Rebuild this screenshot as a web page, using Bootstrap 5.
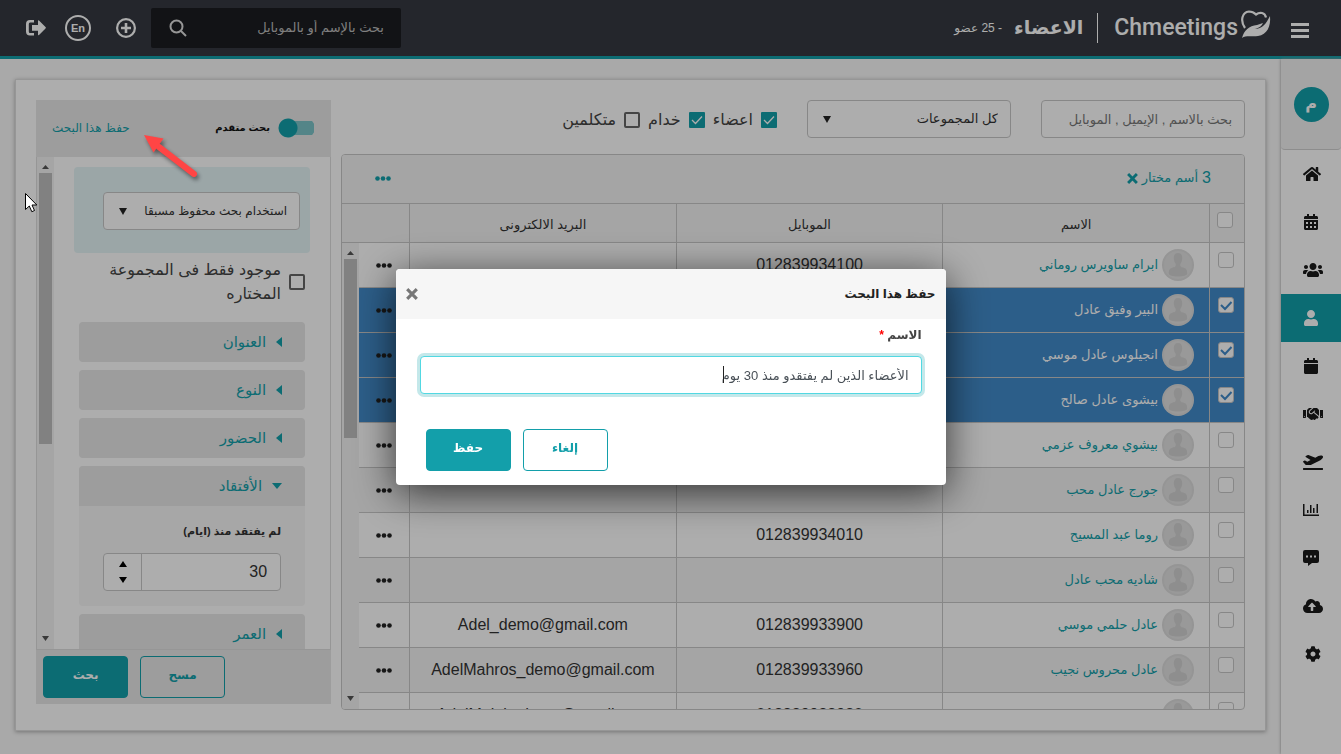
<!DOCTYPE html>
<html lang="ar" dir="rtl">
<head>
<meta charset="utf-8">
<meta name="viewport" content="width=device-width, initial-scale=1">
<title>Chmeetings</title>
<link rel="stylesheet" href="https://cdn.jsdelivr.net/npm/bootstrap@5.3.0/dist/css/bootstrap.min.css">
<style>
:root{--teal:#139faa;--line:#c8c8c8;--soft:#f3f3f3;--shade:#e7e7e7}
body{font-family:"Liberation Sans","DejaVu Sans",sans-serif;font-size:14px;line-height:20px;background:#f9f9f9;color:#333}
a{color:var(--teal);text-decoration:none}
svg{display:block;fill:currentColor}
.app{height:100vh;min-height:560px}
.shrinkable{min-width:0;min-height:0}
.topbar{height:59px;background:#353941;border-bottom:3px solid var(--teal);color:#fff;padding:0 32px 0 26px}
.topbar button{border:0;background:none;color:inherit;padding:0}
.menu-btn{padding-top:5px!important}
.brand{font-family:Roboto,"Liberation Sans",sans-serif;font-size:23px;font-weight:500;color:#fff;gap:3px;margin-right:20px}
.rule-v{width:1px;height:30px;background:#fff;margin:0 16px 0 14px}
.page-title{font-size:19px;font-weight:700;margin:0}
.count{font-size:12px;margin-right:12px}
.top-search{width:250px;height:40px;background:#1b1d21;border-radius:2px;padding:0 15px 0 18px;margin-left:15px}
.top-search input{background:none;border:0;outline:0;color:#ccc;font-size:13px;min-width:0}
.top-search input::placeholder{color:#bbb;opacity:1}
.top-search svg{fill:none}
.topbar .lang{width:26px;height:26px;border:2px solid #fff;border-radius:50%;font-size:11px;font-weight:700;line-height:20px;margin:0 25px 0 19px}
.side{width:60px;background:#fff;box-shadow:0 0 3px #999;color:#1a1a1a;flex:none}
.side-user{height:91px;background:#f2f2f2;border-bottom:1px solid #d0d0d0;border-radius:0 0 4px 4px}
.avatar-me{width:35px;height:35px;border-radius:50%;background:var(--teal);color:#fff;font-size:16px;font-weight:700}
.side a{height:48px;color:#1a1a1a;padding-left:22px}
.side a.active{background:var(--teal);color:#fff}
.main{padding:20px 15px 23px;min-width:0}
.sheet{background:#fff;border:1px solid #ddd;box-shadow:0 1px 4px #aaa;padding:20px;gap:10px}
.filters{gap:30px;margin-bottom:16px}
.field{height:38px;border:1px solid var(--line);border-radius:4px;background-color:#fff;font-size:13px;padding:0 12px;color:#333;outline:0}
.filters .field{flex:0 1 204px;min-width:0}
.field::placeholder{color:#777;opacity:1}
select.field{appearance:none;background-image:url("data:image/svg+xml,%3Csvg xmlns='http://www.w3.org/2000/svg' viewBox='0 0 8 7'%3E%3Cpath d='M0 0h8L4 7z' fill='%23222'/%3E%3C/svg%3E");background-repeat:no-repeat;background-position:15px center;background-size:8px 7px;padding-left:28px}
.tick{appearance:none;width:16px;height:16px;margin:0;flex:none;border:1px solid var(--line);border-radius:3px;background:#fff center/14px no-repeat}
.tick-dark{border:2px solid #666;border-radius:2px}
.tick-teal{border:0;border-radius:1px;background-color:var(--teal);background-image:url("data:image/svg+xml,%3Csvg xmlns='http://www.w3.org/2000/svg' viewBox='0 0 14 14'%3E%3Cpath d='M2 7l3.500 3.500L12 3.500' fill='none' stroke='%23fff' stroke-width='1.300'/%3E%3C/svg%3E")}
.grid-tbl .tick:checked{background-image:url("data:image/svg+xml,%3Csvg xmlns='http://www.w3.org/2000/svg' viewBox='0 0 14 14'%3E%3Cpath d='M2 7l4 4 6.500-7' fill='none' stroke='%23428bca' stroke-width='2'/%3E%3C/svg%3E")}
.opt{font-size:16px;padding-top:2px;color:#444}
.listing{border:1px solid var(--line);border-radius:4px;overflow:hidden;min-height:0}
.tools{height:49px;background:var(--soft);border-bottom:1px solid var(--line);padding:0 33px 2px}
.tools a{font-size:13px}
.num{font-size:16px}
.grid-tbl{width:100%;table-layout:fixed;border-collapse:separate;border-spacing:0}
.grid-tbl th,.grid-tbl td{border-bottom:1px solid var(--line);border-left:1px solid var(--line);text-align:center;padding:0;vertical-align:middle;font-weight:400}
.grid-tbl th:last-child,.grid-tbl td:last-child{border-left:0}
.grid-tbl th{height:39px;background:var(--soft);font-size:13px;padding-top:4px}
.grid-tbl td{height:45px;font-size:16px}
.grid-tbl td:first-child,.grid-tbl th:first-child{vertical-align:top;padding:9px 2px 0 0}
.grid-tbl th:first-child{padding:8px 4px 0 0}
.grid-tbl tr:nth-child(even) td{background:var(--soft)}
.grid-tbl tr.picked td{background:#428bca}
.grid-tbl tr.picked a{color:#fff}
.who{font-size:13px;gap:4px;padding-right:15px}
.col-tick{width:35px}.col-act{width:50px}.col-act-head{width:67px}
.grid-tbl button,.tools button{border:0;background:none;padding:0;color:#222;display:block;margin:0 auto}
.tools button{color:var(--teal);margin:0}
.bar{width:17px;background:var(--soft);flex:none;color:#555}
.thumb{background:#bfbfbf;width:13px}
.panel{width:295px;flex:none;padding-bottom:6px}
.panel-top{height:57px;background:var(--shade);padding:0 16px 2px}
.panel-top a{font-size:12px}
.toggle{appearance:none;width:37px;height:20px;margin:0;background:radial-gradient(circle at 10px 10px,var(--teal) 9px,transparent 10px),linear-gradient(#7cc4c9,#7cc4c9) 4px 3px/32px 14px no-repeat;border-radius:10px}
.toggle-label{font-size:10px;font-weight:700;color:#111}
.panel-body{border:1px solid #ddd;border-top:0;min-height:0;overflow:hidden}
.preset{background:#e5f5f7;border-radius:4px;padding:25px 10px 23px 29px;margin:10px 20px 5px}
.preset .field{font-size:12px}
.only{padding:0 25px;font-size:16px;line-height:24px;gap:8px;margin-bottom:16px;color:#444}
.only label{width:190px}
.fold{margin:0 25px 8px;background:#f6f6f6;border-radius:4px;overflow:hidden}
.fold summary{height:40px;background:var(--shade);color:var(--teal);font-size:15px;padding:0 23px;gap:10px;list-style:none}
.fold-in{padding:15px 24px}
.fold-in label{font-size:11px;font-weight:700;color:#333;margin-bottom:12px}
.spin{height:38px;border:1px solid var(--line);border-radius:4px;background:#fff}
.spin input{border:0;outline:0;background:none;font-size:16px;color:#333;text-align:right;padding:0 13px;min-width:0;direction:ltr;appearance:textfield}
.spin input::-webkit-inner-spin-button{appearance:none}
.spin-btns{width:38px;border-right:1px solid var(--line);gap:10px;flex:none}
.spin-btns button{border:0;background:none;padding:0}
.panel-foot{background:var(--shade);padding:6px 7px;gap:12px}
.act{width:85px;height:42px;border:1px solid var(--teal);border-radius:4px;background:none;color:var(--teal);font-size:12px;font-weight:700;padding:0 0 4px}
.act-main{background:var(--teal);color:#fff}
.modal-backdrop.show{opacity:.32}
.modal-dialog{max-width:550px}
.modal-content{border:0;border-radius:4px;box-shadow:0 8px 40px rgba(0,0,0,.7)}
.modal-header{background:#f6f6f6;height:50px;padding:0 10px;border:0;border-radius:4px 4px 0 0}
.modal-title{font-size:12px;font-weight:700;color:#222}
.modal-header button{border:0;background:none;padding:0;color:#777}
.modal-body{padding:6px 24px 14px}
.modal-body label{font-size:12px;font-weight:700;color:#444;margin-bottom:11px}
.req{color:#f00}
.modal-body .field{border-color:#52d8e2;box-shadow:0 0 0 3px #c4e8ea;color:#495057;caret-color:#222}
.caret-line{position:absolute;right:198px;top:10px;width:1px;height:17px;background:#222}
.modal-foot{padding:21px 30px 14px;gap:12px}
.callout{position:fixed;z-index:1070;left:130px;top:124px;filter:drop-shadow(2px 3px 2px rgba(0,0,0,.45))}
.pointer{position:fixed;z-index:1070;left:24px;top:192px}
</style>
</head>
<body>
<svg width="0" height="0" class="position-absolute" aria-hidden="true">
<symbol id="dots" viewBox="0 0 16 5"><circle cx="2.500" cy="2.500" r="2.300"/><circle cx="8" cy="2.500" r="2.300"/><circle cx="13.500" cy="2.500" r="2.300"/></symbol>
<symbol id="face" viewBox="0 0 32 32"><circle cx="16" cy="16" r="16" fill="#dcdcdc"/><circle cx="16" cy="16" r="14" fill="#e2e2e2"/><path d="M16 4c3 0 4.200 2 4.200 5s-1 5-2 6c0 3 1 3 3 3.500 3 1 4 2 4 6 0 2-4 3-9.200 3s-9.200-1-9.200-3c0-4 1-5 4-6 2-.5 3-.5 3-3.500-1-1-2-3-2-6s1.200-5 4.200-5z" fill="#d2d2d2"/></symbol>
<symbol id="up" viewBox="0 0 8 6"><path d="M0 6h8L4 0z"/></symbol>
<symbol id="down" viewBox="0 0 8 6"><path d="M0 0h8L4 6z"/></symbol>
<symbol id="left" viewBox="0 0 6 10"><path d="M6 0v10L0 5z"/></symbol>
<symbol id="cross" viewBox="0 0 10 10"><path d="M1 1l8 8M9 1l-8 8" stroke="currentColor" stroke-width="2.600"/></symbol>
</svg>

<div class="app d-flex flex-column">
<header class="topbar d-flex align-items-center justify-content-between flex-shrink-0">
  <div class="d-flex align-items-center">
    <button type="button" class="menu-btn" aria-label="القائمة"><svg width="18" height="16" viewBox="0 0 18 16"><path d="M0 0h18v3H0zM0 6h18v3H0zM0 12h18v3H0z"/></svg></button>
    <a href="#" class="brand d-flex align-items-center" dir="ltr"><span>Chmeetings</span><svg class="mb-2" width="30" height="30" viewBox="0 0 30 30"><path d="M4 19C-1 12 1 3 8 2.500c3 0 5 1 7 3 4-3 9-2 10 3" fill="none" stroke="#fff" stroke-width="2.200"/><path d="M1 29c2-8 7-12 15-13l6-2c-1 3-4 5-8 6 7 0 11-5 15-13 1 10-3 19-12 20-6 1-12-1-16 2z"/></svg></a>
    <span class="rule-v"></span>
    <h1 class="page-title">الاعضاء</h1>
    <span class="count">- 25 عضو</span>
  </div>
  <div class="d-flex align-items-center">
    <form class="top-search d-flex align-items-center" role="search">
      <input class="flex-grow-1" type="search" aria-label="بحث" placeholder="بحث بالإسم أو بالموبايل">
      <button type="button" aria-label="بحث"><svg width="18" height="18" viewBox="0 0 18 18" stroke="#ddd" stroke-width="2"><circle cx="7.500" cy="7.500" r="6"/><path d="M12 12l5 5"/></svg></button>
    </form>
    <button type="button" aria-label="إضافة"><svg width="20" height="20" viewBox="0 0 20 20"><path fill-rule="evenodd" d="M10 0a10 10 0 1 1 0 20 10 10 0 0 1 0-20zm0 2.200a7.800 7.800 0 1 0 0 15.600 7.800 7.800 0 0 0 0-15.600z"/><path d="M8.700 5h2.600v3.700H15v2.600h-3.700V15H8.700v-3.700H5V8.700h3.700z"/></svg></button>
    <button type="button" class="lang">En</button>
    <button type="button" aria-label="خروج"><svg width="20" height="16" viewBox="0 0 20 16"><path d="M8 0v2.500H4Q2.800 2.500 2.800 4v7.500q0 1.500 1.200 1.500h4v2.500H4q-4 0-4-4V4q0-4 4-4z"/><path d="M6 5h6V1q0-1 1-.5l6.500 6.600q.7.700 0 1.400L13 15q-1 .7-1-.5v-3.800H6z"/></svg></button>
  </div>
</header>

<div class="d-flex flex-grow-1 shrinkable">
<nav class="side">
  <div class="side-user d-flex align-items-center justify-content-center"><span class="avatar-me d-flex align-items-center justify-content-center">م</span></div>
  <a href="#" class="d-flex align-items-center justify-content-end" aria-label="الرئيسية"><svg width="18" height="16" viewBox="0 0 576 512"><path d="M280.370 148.260L96 300.110V464a16 16 0 0 0 16 16l112.060-.29a16 16 0 0 0 15.920-16V368a16 16 0 0 1 16-16h64a16 16 0 0 1 16 16v95.640a16 16 0 0 0 16 16.050L464 480a16 16 0 0 0 16-16V300L295.670 148.260a12.190 12.190 0 0 0-15.300 0zM571.600 251.470L488 182.560V44.050a12 12 0 0 0-12-12h-56a12 12 0 0 0-12 12v72.610L318.470 43a48 48 0 0 0-61 0L4.340 251.470a12 12 0 0 0-1.600 16.900l25.500 31A12 12 0 0 0 45.150 301l235.220-193.740a12.190 12.190 0 0 1 15.300 0L530.900 301a12 12 0 0 0 16.900-1.600l25.500-31a12 12 0 0 0-1.700-16.930z"/></svg></a>
  <a href="#" class="d-flex align-items-center justify-content-end" aria-label="التقويم"><svg width="16" height="16" viewBox="0 0 448 512"><path fill-rule="evenodd" d="M12 192h424c6.600 0 12 5.400 12 12v260c0 26.500-21.500 48-48 48H48c-26.500 0-48-21.500-48-48V204c0-6.600 5.400-12 12-12zm436-44v-36c0-26.500-21.500-48-48-48h-48V12c0-6.600-5.400-12-12-12h-40c-6.600 0-12 5.400-12 12v52H160V12c0-6.600-5.400-12-12-12h-40c-6.600 0-12 5.400-12 12v52H48C21.500 64 0 85.500 0 112v36c0 6.600 5.400 12 12 12h424c6.600 0 12-5.400 12-12zM64 256v64h64v-64zM192 256v64h64v-64zM320 256v64h64v-64zM64 384v64h64v-64zM192 384v64h64v-64zM320 384v64h64v-64z"/></svg></a>
  <a href="#" class="d-flex align-items-center justify-content-end" aria-label="المجموعات"><svg width="20" height="16" viewBox="0 0 640 512"><path d="M96 224c35.300 0 64-28.700 64-64s-28.700-64-64-64-64 28.700-64 64 28.700 64 64 64zm448 0c35.300 0 64-28.700 64-64s-28.700-64-64-64-64 28.700-64 64 28.700 64 64 64zm32 32h-64c-17.600 0-33.500 7.100-45.100 18.600 40.300 22.100 68.900 62 75.100 109.400h66c17.700 0 32-14.300 32-32v-32c0-35.300-28.700-64-64-64zm-256 0c61.900 0 112-50.100 112-112S381.900 32 320 32 208 82.100 208 144s50.100 112 112 112zm76.800 32h-8.300c-20.800 10-43.900 16-68.500 16s-47.600-6-68.500-16h-8.300C179.600 288 128 339.600 128 403.200V432c0 26.500 21.500 48 48 48h288c26.500 0 48-21.500 48-48v-28.800c0-63.600-51.600-115.200-115.200-115.200zm-223.700-13.400C161.500 263.100 145.600 256 128 256H64c-35.300 0-64 28.700-64 64v32c0 17.700 14.300 32 32 32h65.900c6.300-47.400 34.900-87.300 75.200-109.400z"/></svg></a>
  <a href="#" class="active d-flex align-items-center justify-content-end" aria-label="الاعضاء"><svg width="16" height="16" viewBox="0 0 448 512"><path d="M224 256c70.700 0 128-57.300 128-128S294.700 0 224 0 96 57.300 96 128s57.300 128 128 128zm89.600 32h-16.700c-22.200 10.200-46.900 16-72.900 16s-50.600-5.800-72.900-16h-16.700C60.200 288 0 348.200 0 422.400V464c0 26.500 21.500 48 48 48h352c26.500 0 48-21.500 48-48v-41.600c0-74.200-60.200-134.400-134.400-134.400z"/></svg></a>
  <a href="#" class="d-flex align-items-center justify-content-end" aria-label="الأحداث"><svg width="16" height="16" viewBox="0 0 448 512"><path d="M12 192h424c6.600 0 12 5.400 12 12v260c0 26.500-21.500 48-48 48H48c-26.500 0-48-21.500-48-48V204c0-6.600 5.400-12 12-12zm436-44v-36c0-26.500-21.500-48-48-48h-48V12c0-6.600-5.400-12-12-12h-40c-6.600 0-12 5.400-12 12v52H160V12c0-6.600-5.400-12-12-12h-40c-6.600 0-12 5.400-12 12v52H48C21.500 64 0 85.500 0 112v36c0 6.600 5.400 12 12 12h424c6.600 0 12-5.400 12-12z"/></svg></a>
  <a href="#" class="d-flex align-items-center justify-content-end" aria-label="الافتقاد"><svg width="20" height="16" viewBox="0 0 640 512"><path d="M434.700 64h-85.900c-8 0-15.700 3-21.600 8.400l-98.300 90c-.1.100-.2.300-.3.400-16.600 15.600-16.300 40.500-2.100 56 12.700 13.900 39.400 17.600 56.100 2.700.1-.1.300-.1.400-.2l79.900-73.200c6.500-5.900 16.700-5.500 22.600 1 6 6.500 5.500 16.600-1 22.600l-26.100 23.900L504 313.800c2.900 2.400 5.500 5 7.900 7.700V128l-54.600-54.600c-5.900-6-14.100-9.400-22.600-9.400zM544 128.200v223.900c0 17.700 14.300 32 32 32h64V128.200h-96zm48 223.900c-8.800 0-16-7.200-16-16s7.200-16 16-16 16 7.200 16 16-7.200 16-16 16zM0 384h64c17.700 0 32-14.300 32-32V128.200H0V384zm48-63.900c8.800 0 16 7.200 16 16s-7.200 16-16 16-16-7.200-16-16c0-8.900 7.200-16 16-16zm435.900 18.600L334.600 217.500l-30 27.500c-29.700 27.100-75.200 24.500-101.700-4.400-26.900-29.400-24.800-74.900 4.400-101.700L289.100 64h-83.800c-8.500 0-16.600 3.400-22.600 9.400L128 128v223.900h18.300l90.500 81.900c27.400 22.300 67.700 18.100 90-9.300l.2-.2 17.900 15.500c15.900 13 39.400 10.500 52.300-5.400l31.400-38.600 5.400 4.400c13.700 11.100 33.900 9.100 45-4.700l9.500-11.700c11.200-13.800 9.100-33.900-4.600-45.100z"/></svg></a>
  <a href="#" class="d-flex align-items-center justify-content-end" aria-label="الرحلات"><svg width="20" height="16" viewBox="0 0 640 512"><path d="M624 448H16c-8.840 0-16 7.160-16 16v32c0 8.840 7.160 16 16 16h608c8.840 0 16-7.160 16-16v-32c0-8.840-7.160-16-16-16zM80.550 341.270c6.280 6.840 15.100 10.720 24.330 10.710l130.540-.18a65.620 65.620 0 0 0 29.640-7.120l290.960-147.650c26.740-13.570 50.710-32.940 67.020-58.310 18.310-28.480 20.300-49.090 13.070-63.650-7.210-14.570-24.740-25.270-58.250-27.450-29.850-1.940-59.540 5.920-86.280 19.480l-98.510 49.990-218.700-82.060a17.799 17.799 0 0 0-18-1.110L90.620 67.290c-10.670 5.410-13.250 19.650-5.170 28.530l156.220 98.100-103.210 52.380-72.350-36.470a17.804 17.804 0 0 0-16.070.02L9.910 230.220c-10.440 5.300-13.190 19.120-5.570 28.080l76.210 82.970z"/></svg></a>
  <a href="#" class="d-flex align-items-center justify-content-end" aria-label="التقارير"><svg width="16" height="12" viewBox="0 0 16 12"><path d="M0 0h1.500v10.500H16V12H0zM4 6h1.500v3H4zM7 1h1.500v8H7zM10 4h1.500v5H10zM13.500 0H15v9h-1.500z"/></svg></a>
  <a href="#" class="d-flex align-items-center justify-content-end" aria-label="الرسائل"><svg width="16" height="16" viewBox="0 0 16 16"><path fill-rule="evenodd" d="M2 0h12q2 0 2 2v9q0 2-2 2H9l-4 3v-3H2q-2 0-2-2V2q0-2 2-2zM3 5.500v2h2v-2zM7 5.500v2h2v-2zM11 5.500v2h2v-2z"/></svg></a>
  <a href="#" class="d-flex align-items-center justify-content-end" aria-label="رفع"><svg width="20" height="16" viewBox="0 0 640 512"><path d="M537.600 226.600c4.100-10.700 6.400-22.400 6.400-34.600 0-53-43-96-96-96-19.700 0-38.100 6-53.300 16.200C367 64.200 315.300 32 256 32c-88.400 0-160 71.600-160 160 0 2.700.1 5.400.2 8.100C40.200 219.800 0 273.200 0 336c0 79.500 64.500 144 144 144h368c70.700 0 128-57.300 128-128 0-61.900-44-113.600-102.400-125.400zM393.400 288H328v112c0 8.800-7.200 16-16 16h-48c-8.800 0-16-7.200-16-16V288h-65.400c-14.300 0-21.400-17.200-11.300-27.300l105.400-105.400c6.200-6.200 16.400-6.200 22.600 0l105.400 105.400c10.100 10.100 2.900 27.300-11.300 27.300z"/></svg></a>
  <a href="#" class="d-flex align-items-center justify-content-end" aria-label="الإعدادات"><svg width="20" height="16" viewBox="0 0 512 512"><path d="M487.400 315.700l-42.600-24.600c4.300-23.200 4.300-47 0-70.200l42.600-24.600c4.900-2.800 7.100-8.600 5.500-14-11.100-35.600-30-67.800-54.700-94.600-3.800-4.100-10-5.100-14.800-2.300L380.800 110c-17.900-15.400-38.500-27.300-60.800-35.100V25.800c0-5.600-3.900-10.500-9.400-11.700-36.700-8.200-74.300-7.800-109.200 0-5.500 1.200-9.400 6.100-9.400 11.700V75c-22.200 7.900-42.800 19.800-60.800 35.100L88.700 85.500c-4.900-2.800-11-1.900-14.800 2.300-24.700 26.700-43.600 58.900-54.700 94.600-1.700 5.400.6 11.200 5.500 14L67.300 221c-4.300 23.200-4.300 47 0 70.200l-42.600 24.600c-4.900 2.800-7.100 8.600-5.500 14 11.100 35.600 30 67.800 54.700 94.600 3.800 4.100 10 5.100 14.800 2.300l42.600-24.600c17.900 15.400 38.500 27.300 60.800 35.100v49.200c0 5.600 3.900 10.500 9.400 11.700 36.700 8.200 74.300 7.800 109.200 0 5.500-1.200 9.400-6.100 9.400-11.700v-49.200c22.200-7.900 42.800-19.800 60.800-35.100l42.600 24.600c4.900 2.800 11 1.900 14.800-2.300 24.700-26.700 43.600-58.900 54.700-94.600 1.500-5.500-.7-11.300-5.600-14.100zM256 336c-44.100 0-80-35.900-80-80s35.900-80 80-80 80 35.900 80 80-35.900 80-80 80z"/></svg></a>
</nav>

<main class="main flex-grow-1 d-flex">
<div class="sheet d-flex flex-grow-1 shrinkable">
  <section class="d-flex flex-column flex-grow-1 shrinkable">
    <div class="filters d-flex align-items-center">
      <input class="field" type="search" aria-label="بحث بالاسم" placeholder="بحث بالاسم , الإيميل , الموبايل">
      <select class="field" aria-label="المجموعات"><option>كل المجموعات</option></select>
      <div class="opt d-flex align-items-center gap-2">
        <input class="tick tick-teal" type="checkbox" id="f1" checked><label for="f1">اعضاء</label>
        <input class="tick tick-teal" type="checkbox" id="f2" checked><label for="f2">خدام</label>
        <input class="tick tick-dark" type="checkbox" id="f3"><label for="f3">متكلمين</label>
      </div>
    </div>
    <div class="listing d-flex flex-column flex-grow-1">
      <div class="tools d-flex align-items-center justify-content-between flex-shrink-0">
        <a href="#" class="d-flex align-items-center gap-1"><span class="num">3</span><span>أسم مختار</span><svg width="11" height="11"><use href="#cross"/></svg></a>
        <button type="button" aria-label="المزيد"><svg width="16" height="5"><use href="#dots"/></svg></button>
      </div>
      <table class="grid-tbl flex-shrink-0">
        <colgroup><col class="col-tick"><col><col><col><col class="col-act-head"></colgroup>
        <thead><tr><th><input class="tick" type="checkbox" aria-label="اختيار الكل"></th><th>الاسم</th><th>الموبايل</th><th>البريد الالكترونى</th><th></th></tr></thead>
      </table>
      <div class="d-flex flex-grow-1 overflow-hidden shrinkable">
        <div class="flex-grow-1 shrinkable">
        <table class="grid-tbl">
          <colgroup><col class="col-tick"><col><col><col><col class="col-act"></colgroup>
          <tbody>
          <tr><td><input class="tick" type="checkbox" aria-label="اختيار"></td><td><a href="#" class="who d-flex align-items-center"><svg width="32" height="32"><use href="#face"/></svg>ابرام ساويرس روماني</a></td><td>012839934100</td><td></td><td><button type="button" aria-label="خيارات"><svg width="16" height="5"><use href="#dots"/></svg></button></td></tr>
          <tr class="picked"><td><input class="tick" type="checkbox" aria-label="اختيار" checked></td><td><a href="#" class="who d-flex align-items-center"><svg width="32" height="32"><use href="#face"/></svg>البير وفيق عادل</a></td><td></td><td></td><td><button type="button" aria-label="خيارات"><svg width="16" height="5"><use href="#dots"/></svg></button></td></tr>
          <tr class="picked"><td><input class="tick" type="checkbox" aria-label="اختيار" checked></td><td><a href="#" class="who d-flex align-items-center"><svg width="32" height="32"><use href="#face"/></svg>انجيلوس عادل موسي</a></td><td></td><td></td><td><button type="button" aria-label="خيارات"><svg width="16" height="5"><use href="#dots"/></svg></button></td></tr>
          <tr class="picked"><td><input class="tick" type="checkbox" aria-label="اختيار" checked></td><td><a href="#" class="who d-flex align-items-center"><svg width="32" height="32"><use href="#face"/></svg>بيشوى عادل صالح</a></td><td></td><td></td><td><button type="button" aria-label="خيارات"><svg width="16" height="5"><use href="#dots"/></svg></button></td></tr>
          <tr><td><input class="tick" type="checkbox" aria-label="اختيار"></td><td><a href="#" class="who d-flex align-items-center"><svg width="32" height="32"><use href="#face"/></svg>بيشوي معروف عزمي</a></td><td></td><td></td><td><button type="button" aria-label="خيارات"><svg width="16" height="5"><use href="#dots"/></svg></button></td></tr>
          <tr><td><input class="tick" type="checkbox" aria-label="اختيار"></td><td><a href="#" class="who d-flex align-items-center"><svg width="32" height="32"><use href="#face"/></svg>جورج عادل محب</a></td><td></td><td></td><td><button type="button" aria-label="خيارات"><svg width="16" height="5"><use href="#dots"/></svg></button></td></tr>
          <tr><td><input class="tick" type="checkbox" aria-label="اختيار"></td><td><a href="#" class="who d-flex align-items-center"><svg width="32" height="32"><use href="#face"/></svg>روما عبد المسيح</a></td><td>012839934010</td><td></td><td><button type="button" aria-label="خيارات"><svg width="16" height="5"><use href="#dots"/></svg></button></td></tr>
          <tr><td><input class="tick" type="checkbox" aria-label="اختيار"></td><td><a href="#" class="who d-flex align-items-center"><svg width="32" height="32"><use href="#face"/></svg>شاديه محب عادل</a></td><td></td><td></td><td><button type="button" aria-label="خيارات"><svg width="16" height="5"><use href="#dots"/></svg></button></td></tr>
          <tr><td><input class="tick" type="checkbox" aria-label="اختيار"></td><td><a href="#" class="who d-flex align-items-center"><svg width="32" height="32"><use href="#face"/></svg>عادل حلمي موسي</a></td><td>012839933900</td><td>Adel_demo@gmail.com</td><td><button type="button" aria-label="خيارات"><svg width="16" height="5"><use href="#dots"/></svg></button></td></tr>
          <tr><td><input class="tick" type="checkbox" aria-label="اختيار"></td><td><a href="#" class="who d-flex align-items-center"><svg width="32" height="32"><use href="#face"/></svg>عادل محروس نجيب</a></td><td>012839933960</td><td>AdelMahros_demo@gmail.com</td><td><button type="button" aria-label="خيارات"><svg width="16" height="5"><use href="#dots"/></svg></button></td></tr>
          <tr><td><input class="tick" type="checkbox" aria-label="اختيار"></td><td><a href="#" class="who d-flex align-items-center"><svg width="32" height="32"><use href="#face"/></svg>عادل معوض</a></td><td>012839933930</td><td>AdelMalak_demo@gmail.com</td><td><button type="button" aria-label="خيارات"><svg width="16" height="5"><use href="#dots"/></svg></button></td></tr>
          </tbody>
        </table>
        </div>
        <div class="bar d-flex flex-column align-items-center py-1">
          <svg class="my-1" width="7" height="4" viewBox="0 0 8 6" preserveAspectRatio="none"><path d="M0 6h8L4 0z"/></svg><div class="thumb" style="height:39%"></div><svg class="mt-auto mb-1" width="7" height="5" viewBox="0 0 8 6" preserveAspectRatio="none"><path d="M0 0h8L4 6z"/></svg>
        </div>
      </div>
    </div>
  </section>

  <aside class="panel d-flex flex-column">
    <div class="panel-top d-flex align-items-center justify-content-between flex-shrink-0">
      <div class="d-flex align-items-center gap-2"><input class="toggle" type="checkbox" role="switch" id="adv" checked><label class="toggle-label" for="adv">بحث متقدم</label></div>
      <a href="#">حفظ هذا البحث</a>
    </div>
    <div class="panel-body d-flex flex-grow-1">
      <div class="flex-grow-1 shrinkable">
        <div class="preset"><select class="field w-100" aria-label="بحث محفوظ"><option>استخدام بحث محفوظ مسبقا</option></select></div>
        <div class="only d-flex align-items-center"><input class="tick tick-dark" type="checkbox" id="only"><label for="only">موجود فقط فى المجموعة المختاره</label></div>
        <details class="fold"><summary class="d-flex align-items-center"><svg width="6" height="10"><use href="#left"/></svg>العنوان</summary></details>
        <details class="fold"><summary class="d-flex align-items-center"><svg width="6" height="10"><use href="#left"/></svg>النوع</summary></details>
        <details class="fold"><summary class="d-flex align-items-center"><svg width="6" height="10"><use href="#left"/></svg>الحضور</summary></details>
        <details class="fold" open><summary class="d-flex align-items-center"><svg width="10" height="6" viewBox="0 0 8 6" preserveAspectRatio="none"><path d="M0 0h8L4 6z"/></svg>الأفتقاد</summary>
          <div class="fold-in"><label class="d-block" for="days">لم يفتقد منذ (ايام)</label>
            <div class="spin d-flex"><input class="flex-grow-1" type="number" id="days" value="30"><div class="spin-btns d-flex flex-column align-items-center justify-content-center"><button type="button" aria-label="زيادة"><svg width="8" height="6"><use href="#up"/></svg></button><button type="button" aria-label="نقص"><svg width="8" height="6"><use href="#down"/></svg></button></div></div>
          </div></details>
        <details class="fold"><summary class="d-flex align-items-center"><svg width="6" height="10"><use href="#left"/></svg>العمر</summary></details>
      </div>
      <div class="bar d-flex flex-column align-items-center py-1">
        <svg class="my-1" width="7" height="4" viewBox="0 0 8 6" preserveAspectRatio="none"><path d="M0 6h8L4 0z"/></svg><div class="thumb" style="height:56%"></div><svg class="mt-auto mb-1" width="7" height="5" viewBox="0 0 8 6" preserveAspectRatio="none"><path d="M0 0h8L4 6z"/></svg>
      </div>
    </div>
    <div class="panel-foot d-flex justify-content-end flex-shrink-0"><button type="button" class="act">مسح</button><button type="button" class="act act-main">بحث</button></div>
  </aside>
</div>
</main>
</div>
</div>

<div class="modal-backdrop show"></div>
<div class="modal show d-block" tabindex="-1" role="dialog" aria-labelledby="dlg">
  <div class="modal-dialog modal-dialog-centered">
    <form class="modal-content">
      <div class="modal-header d-flex align-items-center justify-content-between">
        <h2 class="modal-title" id="dlg">حفظ هذا البحث</h2>
        <button type="button" aria-label="إغلاق"><svg width="12" height="12"><use href="#cross"/></svg></button>
      </div>
      <div class="modal-body">
        <label class="d-block" for="sname">الاسم <span class="req">*</span></label>
        <div class="position-relative"><input class="field w-100" id="sname" value="الأعضاء الذين لم يفتقدو منذ 30 يوم"><span class="caret-line"></span></div>
      </div>
      <div class="modal-foot d-flex justify-content-end"><button type="button" class="act">إلغاء</button><button type="button" class="act act-main">حفظ</button></div>
    </form>
  </div>
</div>

<svg class="callout" width="72" height="60" viewBox="130 124 72 60" aria-hidden="true"><path d="M159 147l35 27" stroke="#ff4545" stroke-width="6" stroke-linecap="round"/><path d="M144 135l19.500 3.500-10 14z" fill="#ff4545"/></svg>
<svg class="pointer" width="14" height="21" viewBox="0 0 14 21" aria-hidden="true"><path d="M1.500 1.500v16l3.800-3.500 2.500 5.700 2.700-1.200-2.500-5.500h4.800z" fill="#fff" stroke="#000"/></svg>
<script src="https://cdn.jsdelivr.net/npm/bootstrap@5.3.0/dist/js/bootstrap.bundle.min.js"></script>
</body>
</html>
